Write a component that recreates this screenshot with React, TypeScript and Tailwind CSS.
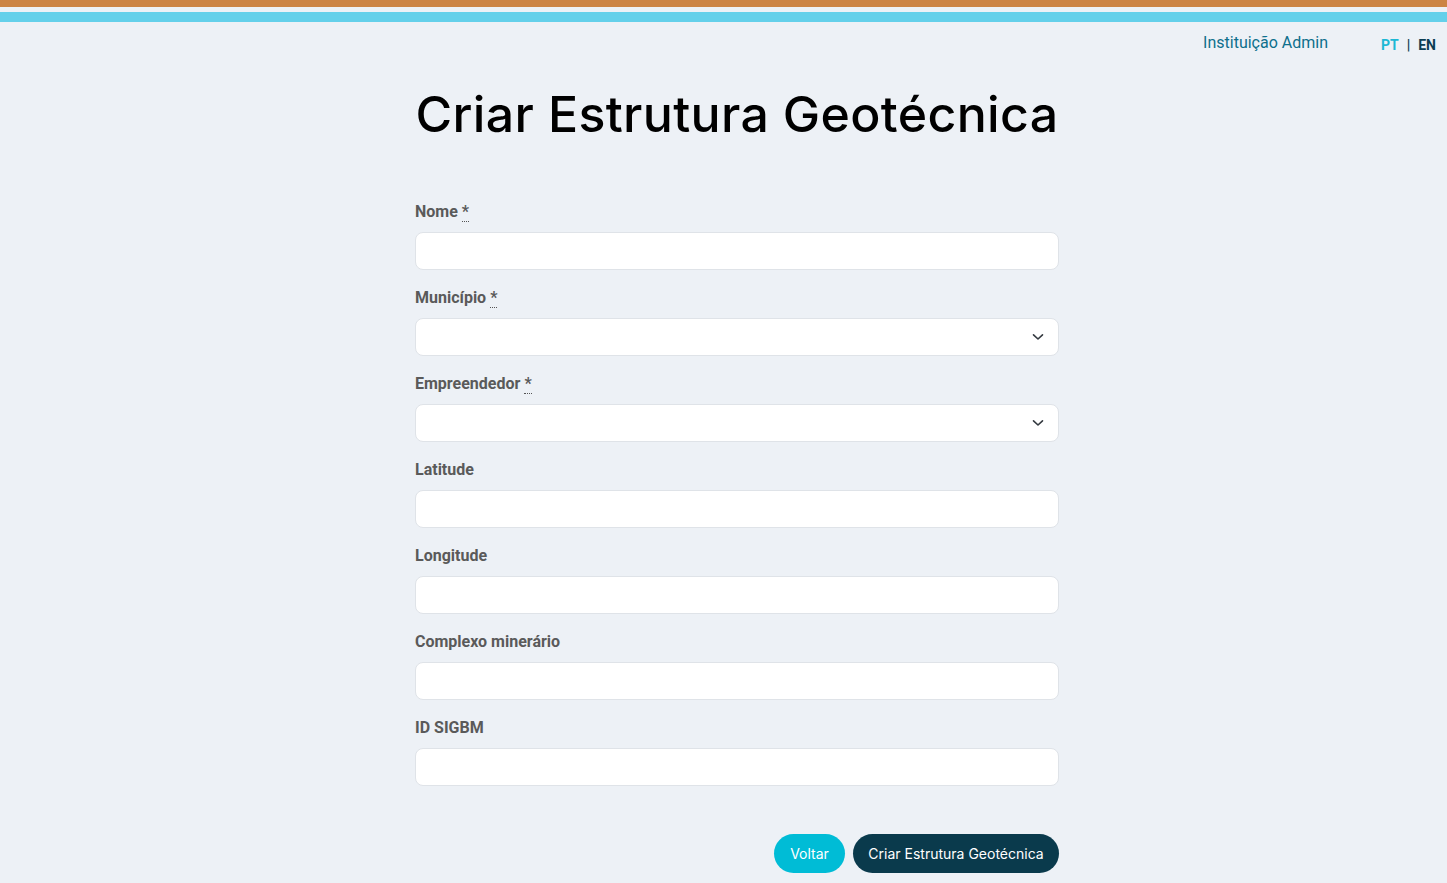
import React from "react";

const Req = () => (
  <abbr
    title="obrigatório"
    className="ml-1 border-b border-dotted border-[#555] leading-none"
    style={{ textDecoration: "none" }}
  >
    *
  </abbr>
);

const Chevron = () => (
  <svg width="12" height="8" viewBox="0 0 12 8" fill="none" className="absolute right-[15px] top-1/2 -translate-y-1/2">
    <path d="M1.5 1.8 L6 6 L10.5 1.8" stroke="#343a40" strokeWidth="1.6" strokeLinecap="round" strokeLinejoin="round" />
  </svg>
);

function Field({ label, required, select }: { label: string; required?: boolean; select?: boolean }) {
  return (
    <div className="mb-[18px]">
      <label className="block text-[16px] font-bold text-[#5a5a5a] leading-[20px] mb-[10px]">
        {label}
        {required && <Req />}
      </label>
      <div className="relative">
        {select ? (
          <div className="h-[38px] w-full rounded-[8px] border border-[#dfe3e8] bg-white">
            <Chevron />
          </div>
        ) : (
          <input className="block h-[38px] w-full rounded-[8px] border border-[#dfe3e8] bg-white px-3 outline-none" />
        )}
      </div>
    </div>
  );
}

export default function App() {
  return (
    <div className="min-h-[883px] bg-[#edf1f6]" style={{ fontFamily: "Roboto, 'Liberation Sans', sans-serif" }}>
      <div className="h-[7px] bg-[#cc8444]" />
      <div className="h-[5px]" />
      <div className="h-[10px] bg-[#64d0ea]" />
      <div className="flex items-center justify-end h-[42px] pr-[11px]">
        <span className="text-[16px] text-[#0e6f8c] mr-[53px]">Instituição Admin</span>
        <span className="text-[14px] font-bold text-[#1cb8d4] pt-[4px]">PT</span>
        <span className="text-[14px] font-bold text-[#0b3d52] mx-[8px] pt-[4px]">|</span>
        <span className="text-[14px] font-bold text-[#0b3d52] pt-[4px]">EN</span>
      </div>
      <div className="ml-[415px] w-[644px]">
        <h1
          className="-mx-[30px] whitespace-nowrap text-center text-[50px] leading-[60px] text-black font-medium mt-[20px] mb-[58px] tracking-[0.35px]"
          style={{ fontFamily: "Inter, 'Open Sans', sans-serif" }}
        >
          Criar Estrutura Geotécnica
        </h1>
        <Field label="Nome" required />
        <Field label="Município" required select />
        <Field label="Empreendedor" required select />
        <Field label="Latitude" />
        <Field label="Longitude" />
        <Field label="Complexo minerário" />
        <Field label="ID SIGBM" />
        <div className="flex justify-end gap-[8px] mt-[48px]" style={{ fontFamily: "Inter, 'Open Sans', sans-serif" }}>
          <button className="h-[39px] w-[71px] rounded-full bg-[#00bcd6] text-white text-[14px]">Voltar</button>
          <button className="h-[39px] w-[206px] rounded-full bg-[#0a3a4c] text-white text-[14px]">
            Criar Estrutura Geotécnica
          </button>
        </div>
      </div>
    </div>
  );
}
